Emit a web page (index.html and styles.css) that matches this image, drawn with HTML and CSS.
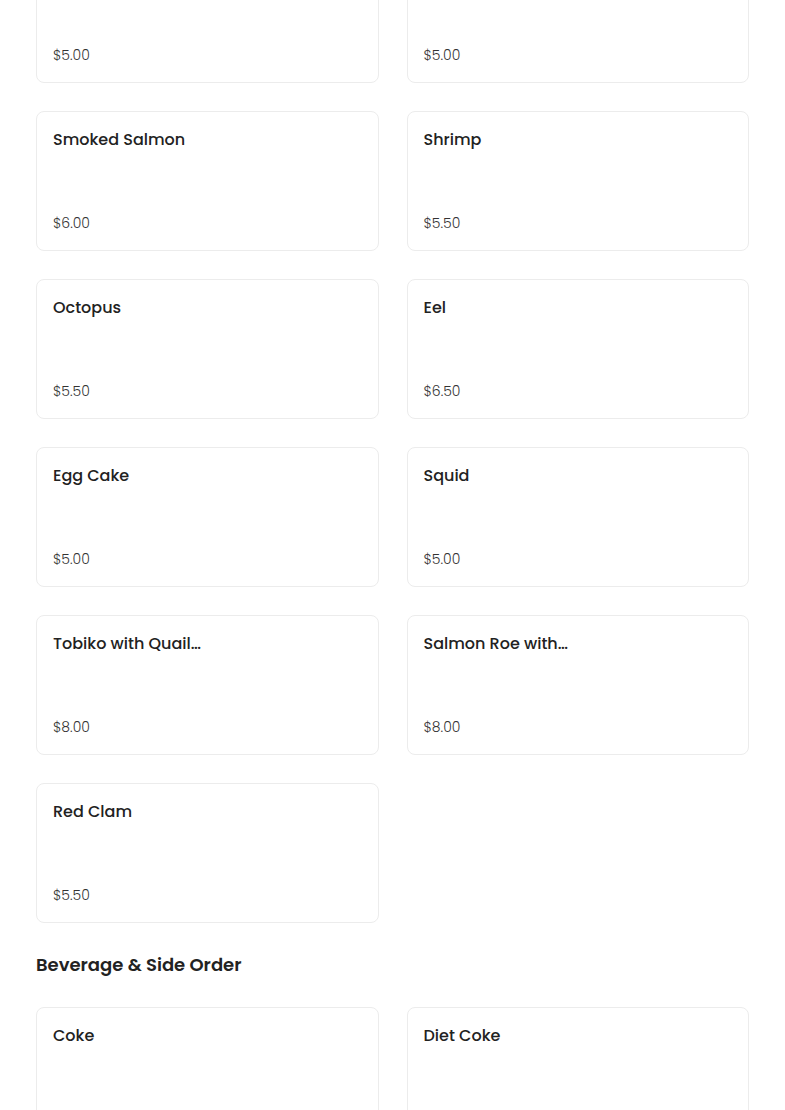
FILE: index.html
```html
<!DOCTYPE html>
<html lang="en">
<head>
<meta charset="utf-8">
<title>Menu</title>
<link rel="stylesheet" href="styles.css">
</head>
<body>
<main class="menu">
  <section class="category">
    <div class="grid">
      <div class="card"><div class="name"></div><div class="price">$5.00</div></div>
      <div class="card"><div class="name"></div><div class="price">$5.00</div></div>
      <div class="card"><div class="name">Smoked Salmon</div><div class="price">$6.00</div></div>
      <div class="card"><div class="name">Shrimp</div><div class="price">$5.50</div></div>
      <div class="card"><div class="name">Octopus</div><div class="price">$5.50</div></div>
      <div class="card"><div class="name">Eel</div><div class="price">$6.50</div></div>
      <div class="card"><div class="name">Egg Cake</div><div class="price">$5.00</div></div>
      <div class="card"><div class="name">Squid</div><div class="price">$5.00</div></div>
      <div class="card"><div class="name">Tobiko with Quail…</div><div class="price">$8.00</div></div>
      <div class="card"><div class="name">Salmon Roe with…</div><div class="price">$8.00</div></div>
      <div class="card"><div class="name">Red Clam</div><div class="price">$5.50</div></div>
    </div>
  </section>
  <section class="category">
    <h2 class="cat-title">Beverage &amp; Side Order</h2>
    <div class="grid">
      <div class="card"><div class="name">Coke</div><div class="price">$2.00</div></div>
      <div class="card"><div class="name">Diet Coke</div><div class="price">$2.00</div></div>
    </div>
  </section>
</main>
</body>
</html>
```
FILE: styles.css
```css
html, body {
  margin: 0;
  padding: 0;
  background: #ffffff;
}
body {
  font-family: Poppins, "Open Sans", "DejaVu Sans", sans-serif;
  color: #222222;
}
.menu {
  margin-top: -57px;
  padding: 0 36px;
}
.grid {
  display: grid;
  grid-template-columns: 1fr 1fr;
  gap: 28px;
}
.card {
  height: 140px;
  box-sizing: border-box;
  border: 1px solid #ececec;
  border-radius: 8px;
  padding: 15px 16px 16px;
  display: flex;
  flex-direction: column;
  justify-content: space-between;
  background: #fff;
}
.name {
  min-height: 26px;
  font-size: 16px;
  font-weight: 500;
  line-height: 26px;
  color: #222;
}
.price {
  font-size: 14px;
  font-weight: 300;
  line-height: 21px;
  color: #333;
}
.cat-title {
  margin: 28px 0 28px;
  font-size: 18px;
  font-weight: 600;
  line-height: 28px;
  color: #222;
}
```
